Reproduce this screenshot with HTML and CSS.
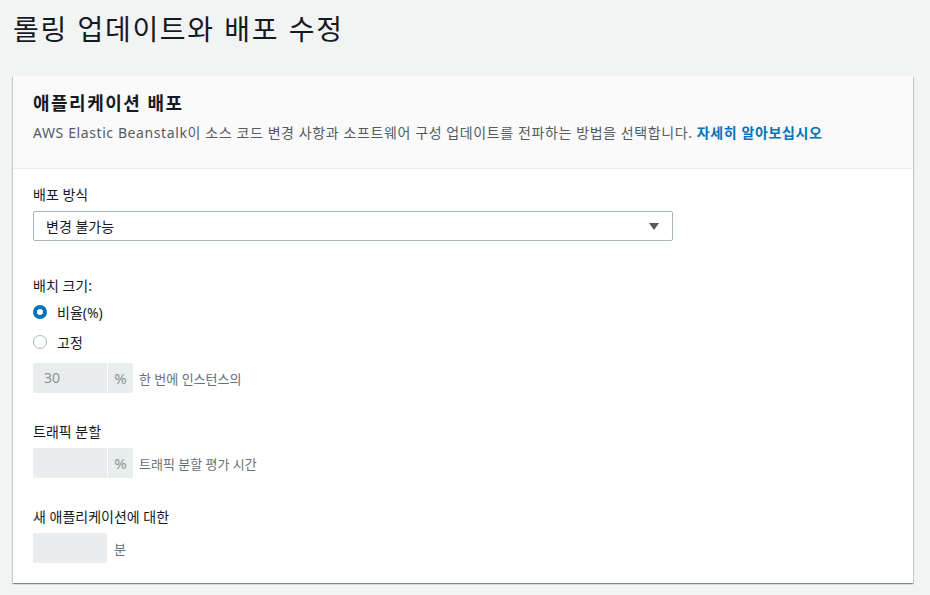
FILE: index.html
```html
<!DOCTYPE html>
<html lang="ko">
<head>
<meta charset="utf-8">
<title>롤링 업데이트와 배포 수정</title>
<link rel="stylesheet" href="styles.css">
</head>
<body>
<h1 class="page-title">롤링 업데이트와 배포 수정</h1>
<section class="card">
  <header class="card-header">
    <h2 class="card-title">애플리케이션 배포</h2>
    <p class="card-desc">AWS Elastic Beanstalk이 소스 코드 변경 사항과 소프트웨어 구성 업데이트를 전파하는 방법을 선택합니다. <a class="link" href="#">자세히 알아보십시오</a></p>
  </header>
  <div class="card-body">
    <div class="group group-first">
      <div class="label">배포 방식</div>
      <div class="select">
        <span>변경 불가능</span>
        <svg class="caret" width="10" height="7" viewBox="0 0 10 7"><path d="M0 0H10L5 7Z" fill="#545b64"/></svg>
      </div>
    </div>
    <div class="group">
      <div class="label">배치 크기:</div>
      <div class="radio-row"><span class="radio checked"></span><span>비율(%)</span></div>
      <div class="radio-row"><span class="radio"></span><span>고정</span></div>
      <div class="input-row">
        <div class="input">30</div><div class="addon">%</div><span class="hint">한 번에 인스턴스의</span>
      </div>
    </div>
    <div class="group">
      <div class="label">트래픽 분할</div>
      <div class="input-row">
        <div class="input"></div><div class="addon">%</div><span class="hint">트래픽 분할 평가 시간</span>
      </div>
    </div>
    <div class="group">
      <div class="label">새 애플리케이션에 대한</div>
      <div class="input-row">
        <div class="input input-solo"></div><span class="hint hint-wide">분</span>
      </div>
    </div>
  </div>
</section>
</body>
</html>
```
FILE: styles.css
```css
* { box-sizing: border-box; }
html, body { margin: 0; padding: 0; }
body {
  background: #f2f3f3;
  font-family: "Noto Sans", "Noto Sans CJK KR", sans-serif;
  color: #16191f;
  font-size: 14px;
  width: 930px;
  height: 595px;
  overflow: hidden;
}
.page-title {
  margin: 0;
  padding: 10px 0 0 13px;
  font-size: 28px;
  line-height: 36px;
  font-weight: 400;
  letter-spacing: 1.7px;
  color: #16191f;
  font-family: "Noto Sans CJK KR", "Noto Sans", sans-serif;
}
.card {
  margin: 30px 0 0 13px;
  width: 900px;
  background: #fff;
  box-shadow: 0 1px 1px 0 rgba(0,28,36,.3), 1px 1px 1px 0 rgba(0,28,36,.15), -1px 1px 1px 0 rgba(0,28,36,.15);
}
.card-header {
  background: #fafafa;
  border-bottom: 1px solid #eaeded;
  padding: 16px 20px 24px 20px;
}
.card-title {
  margin: 0;
  font-size: 18px;
  line-height: 22px;
  font-weight: 700;
  letter-spacing: 1.5px;
  color: #16191f;
}
.card-desc {
  margin: 8px 0 0 0;
  font-size: 14px;
  line-height: 22px;
  letter-spacing: 0.6px;
  color: #545b64;
}
.link { color: #0073bb; font-weight: 700; text-decoration: none; }
.card-body {
  padding: 15px 20px 20px 20px;
  display: flex;
  flex-direction: column;
  gap: 28px;
}
.group-first { margin-bottom: 6px; }
.label {
  font-size: 14px;
  line-height: 22px;
  color: #16191f;
  margin-bottom: 5px;
}
.select {
  width: 640px;
  height: 30px;
  border: 1px solid #aab7b8;
  border-radius: 2px;
  display: flex;
  align-items: center;
  justify-content: space-between;
  padding: 0 13px 0 12px;
  color: #16191f;
  font-size: 14px;
}
.caret { display: block; margin-top: 1px; }
.group .label + .radio-row { margin-top: -5px; }
.radio-row {
  height: 30px;
  display: flex;
  align-items: center;
  gap: 10px;
  font-size: 14px;
  color: #16191f;
}
.radio {
  width: 14px;
  height: 14px;
  border-radius: 50%;
  border: 1.5px solid #aab7b8;
  background: #fff;
}
.radio.checked {
  border: 4px solid #0073bb;
}
.input-row {
  display: flex;
  align-items: center;
}
.radio-row + .input-row { margin-top: 6px; }
.input {
  width: 74px;
  height: 30px;
  background: #eaeded;
  border-radius: 2px 0 0 2px;
  color: #879596;
  font-size: 14px;
  line-height: 30px;
  padding-left: 11px;
}
.input-solo { border-radius: 2px; }
.addon {
  width: 25px;
  height: 30px;
  margin-left: 1px;
  background: #eaeded;
  border-radius: 0 2px 2px 0;
  color: #879596;
  font-size: 15px;
  line-height: 30px;
  text-align: center;
}
.hint {
  margin-left: 6px;
  font-size: 13px;
  color: #687078;
}
.hint-wide { margin-left: 7px; }
```
